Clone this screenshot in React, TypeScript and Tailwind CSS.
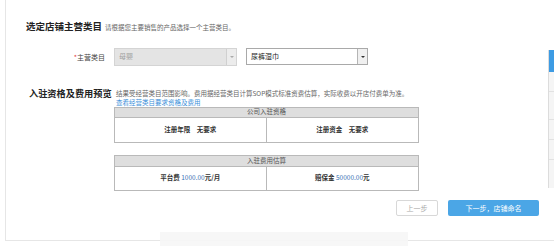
const FONT = { fontFamily: '"Noto Sans CJK SC", "Liberation Sans", sans-serif' };

function Select({ value, disabled, width }: { value: string; disabled?: boolean; width: string }) {
  return (
    <div
      className={`flex h-[17px] items-stretch border ${width} ${
        disabled ? "border-[#d4d4d4] bg-[#e4e4e4]" : "border-[#a9a9a9] bg-white"
      }`}
    >
      <span
        className={`flex-1 pl-[4px] text-[7px] leading-[15px] ${disabled ? "text-[#a0a0a0]" : "text-[#222]"}`}
      >
        {value}
      </span>
      <span
        className={`flex w-[10px] items-center justify-center border-l ${
          disabled ? "border-[#d0d0d0] bg-[#ececec]" : "border-[#b5b5b5] bg-[#f0f0f0]"
        }`}
      >
        <span
          className={`h-0 w-0 border-x-[2px] border-t-[2px] border-x-transparent ${
            disabled ? "border-t-[#aaa]" : "border-t-[#333]"
          }`}
        />
      </span>
    </div>
  );
}

function InfoTable({ title, cells, headH, bodyH }: { title: string; cells: React.ReactNode[]; headH: string; bodyH: string }) {
  return (
    <div className="w-[305px] border border-[#b9b9b9]">
      <div className={`${headH} flex items-center justify-center bg-[#dedede] text-[6.5px] text-[#555]`}>{title}</div>
      <div className={`${bodyH} grid grid-cols-2 border-t border-[#b9b9b9] bg-white`}>
        {cells.map((c, i) => (
          <div
            key={i}
            className={`flex items-center justify-center text-[6.5px] font-bold text-[#333] ${
              i === 0 ? "border-r border-[#b9b9b9]" : ""
            }`}
          >
            {c}
          </div>
        ))}
      </div>
    </div>
  );
}

export default function App() {
  return (
    <div className="relative h-[246px] w-[554px] overflow-hidden bg-white" style={FONT}>
      <div className="ml-[5px] h-[241px] border-b border-l border-[#e6e6e6] pr-[15px]">
        {/* section 1 */}
        <div className="flex items-baseline pl-[20px] pt-[20px]">
          <h2 className="whitespace-nowrap text-[9.5px] leading-[12px] font-bold text-[#222]">选定店铺主营类目</h2>
          <span className="ml-[3px] text-[6.5px] text-[#666]">请根据您主要销售的产品选择一个主营类目。</span>
        </div>

        <div className="mt-[15px] flex items-center pl-[20px]">
          <label className="w-[79px] text-right text-[7px] text-[#444]">
            <span className="text-[#e4393c]">*</span>主营类目
          </label>
          <div className="ml-[9px] flex items-center gap-[9px]">
            <Select value="母婴" disabled width="w-[123px] h-[18px]" />
            <Select value="尿裤湿巾" width="w-[122px]" />
          </div>
        </div>

        {/* section 2 */}
        <div className="mt-[21px] flex items-start pl-[23px]">
          <h2 className="w-[85px] shrink-0 whitespace-nowrap text-[9.2px] leading-[12px] font-bold text-[#222]">
            入驻资格及费用预览
          </h2>
          <div className="pt-[1px]">
            <p className="pl-[2px] text-[6.5px] leading-[10px] text-[#666]">
              结果受经营类目范围影响。费用据经营类目计算SOP模式标准资费估算，实际收费以开店付费单为准。
            </p>
            <a className="block pl-[2px] text-[6.5px] leading-[9px] text-[#3b8fd9]">查看经营类目要求资格及费用</a>
            <InfoTable
              title="公司入驻资格"
              headH="h-[9px]"
              bodyH="h-[25px]"
              cells={["注册年限　无要求", "注册资金　无要求"]}
            />
            <div className="mt-[12px]">
              <InfoTable
                title="入驻费用估算"
                headH="h-[10px]"
                bodyH="h-[24px]"
                cells={[
                  <>
                    平台费&nbsp;<span className="font-normal text-[#3771b5]">1000.00</span>元/月
                  </>,
                  <>
                    赔保金&nbsp;<span className="font-normal text-[#3771b5]">50000.00</span>元
                  </>,
                ]}
              />
            </div>
          </div>
        </div>

        <div className="mt-[9px] flex justify-end gap-[10px]">
          <button className="h-[16px] w-[42px] rounded-[2px] border border-[#d8d8d8] bg-white text-[7px] text-[#aaa]">
            上一步
          </button>
          <button className="h-[16px] w-[91px] rounded-[2px] bg-[#4ba6e6] text-[7px] text-white">
            下一步，店铺命名
          </button>
        </div>
      </div>

      {/* faded overlay near footer */}
      <div className="absolute left-[160px] top-[232px] h-[14px] w-[248px] bg-[#f6f6f6]/90" />

      {/* floating side toolbar */}
      <div className="absolute left-[548px] top-[50px] w-[10px] border-l border-[#dcdcdc]">
        <div className="h-[22px] bg-[#3d9be3]" />
        <div className="h-[20px] border-b border-[#e2e2e2] bg-[#f5f5f5]" />
        <div className="h-[28px] border-b border-[#e2e2e2] bg-[#f5f5f5]" />
        <div className="h-[20px] border-b border-[#e2e2e2] bg-[#f5f5f5]" />
        <div className="h-[20px] border-b border-[#e2e2e2] bg-[#f5f5f5]" />
        <div className="h-[28px] bg-[#f5f5f5]" />
      </div>
    </div>
  );
}
